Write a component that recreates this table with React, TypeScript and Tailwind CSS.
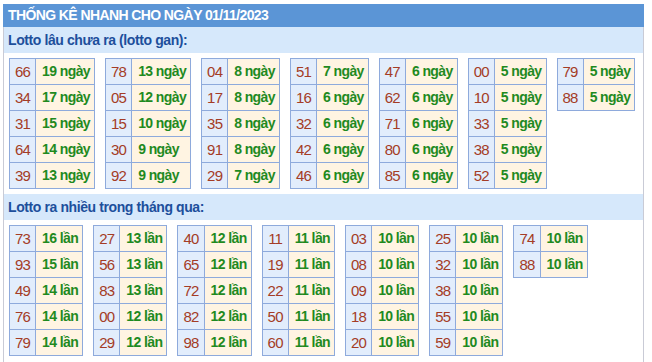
import React from "react";

type Cell = [string, string];

const gan: Cell[][] = [
  [["66", "19"], ["34", "17"], ["31", "15"], ["64", "14"], ["39", "13"]],
  [["78", "13"], ["05", "12"], ["15", "10"], ["30", "9"], ["92", "9"]],
  [["04", "8"], ["17", "8"], ["35", "8"], ["91", "8"], ["29", "7"]],
  [["51", "7"], ["16", "6"], ["32", "6"], ["42", "6"], ["46", "6"]],
  [["47", "6"], ["62", "6"], ["71", "6"], ["80", "6"], ["85", "6"]],
  [["00", "5"], ["10", "5"], ["33", "5"], ["38", "5"], ["52", "5"]],
  [["79", "5"], ["88", "5"]],
];

const nhieu: Cell[][] = [
  [["73", "16"], ["93", "15"], ["49", "14"], ["76", "14"], ["79", "14"]],
  [["27", "13"], ["56", "13"], ["83", "13"], ["00", "12"], ["29", "12"]],
  [["40", "12"], ["65", "12"], ["72", "12"], ["82", "12"], ["98", "12"]],
  [["11", "11"], ["19", "11"], ["22", "11"], ["50", "11"], ["60", "11"]],
  [["03", "10"], ["08", "10"], ["09", "10"], ["18", "10"], ["20", "10"]],
  [["25", "10"], ["32", "10"], ["38", "10"], ["55", "10"], ["59", "10"]],
  [["74", "10"], ["88", "10"]],
];

function Tbl({ rows, unit }: { rows: Cell[]; unit: string }) {
  return (
    <table className="border-collapse border border-[#8eaadc]">
      <tbody>
        {rows.map(([n, v], i) => (
          <tr key={i} className="h-[26px]">
            <td className="border border-[#8eaadc] bg-[#e2edfc] px-[5px] py-0 text-center text-[15px] tracking-[-0.8px] leading-[25px] text-[#a43c26]">
              {n}
            </td>
            <td className="border border-[#8eaadc] bg-[#fff4e2] pl-[6px] pr-[4px] py-0 text-left text-[14px] tracking-[-0.6px] font-bold leading-[25px] text-[#1f8a1f] whitespace-nowrap">
              {v} {unit}
            </td>
          </tr>
        ))}
      </tbody>
    </table>
  );
}

function Section({ title, data, unit }: { title: string; data: Cell[][]; unit: string }) {
  return (
    <>
      <div className="h-[26px] bg-[#d6e8fb] pl-[4px] text-[14px] tracking-[-0.4px] font-bold leading-[26px] text-[#1d4f9c]">
        {title}
      </div>
      <div className="flex items-start gap-[10px] px-[5px] py-[5px]">
        {data.map((rows, i) => (
          <Tbl key={i} rows={rows} unit={unit} />
        ))}
      </div>
    </>
  );
}

export default function App() {
  return (
    <div
      className="bg-white pl-[3px] pt-[4px] w-[652px] h-[362px] overflow-hidden"
      style={{ fontFamily: '"Liberation Sans", Arial, sans-serif' }}
    >
      <div className="w-[641px] border-x border-[#c9cbd6] min-h-[400px]">
        <div className="-mx-px h-[23px] bg-[#5b95d6] pl-[5px] text-[14px] tracking-[-0.6px] font-bold leading-[23px] text-white">
          THỐNG KÊ NHANH CHO NGÀY 01/11/2023
        </div>
        <Section title="Lotto lâu chưa ra (lotto gan):" data={gan} unit="ngày" />
        <Section title="Lotto ra nhiều trong tháng qua:" data={nhieu} unit="lần" />
      </div>
    </div>
  );
}
